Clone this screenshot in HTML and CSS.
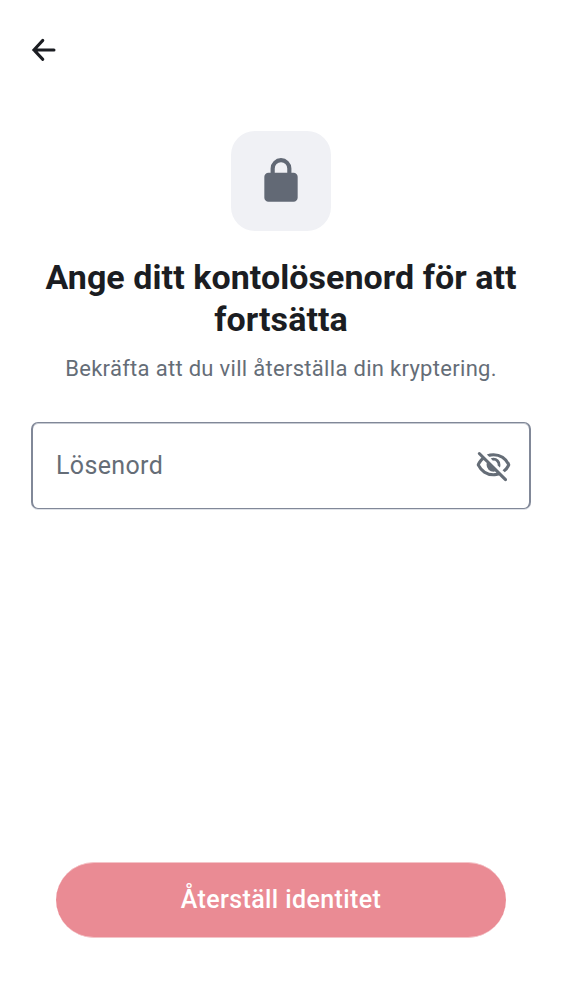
FILE: index.html
```html
<!DOCTYPE html>
<html lang="sv">
<head>
<meta charset="utf-8">
<title>Återställ identitet</title>
<link rel="stylesheet" href="styles.css">
</head>
<body>
<main class="screen">
  <header class="topbar">
    <svg class="back" viewBox="0 0 30 30"><path d="M14.8 5.4 5.9 14.9l8.9 9.5M6 14.9h20"/></svg>
  </header>
  <section class="content">
    <div class="tile">
      <svg class="lock" viewBox="0 0 24 24"><path d="M6 22q-.824 0-1.412-.587A1.93 1.93 0 0 1 4 20V10q0-.825.588-1.412A1.93 1.93 0 0 1 6 8h1V6q0-2.075 1.463-3.537Q9.926 1 12 1t3.537 1.463T17 6v2h1q.824 0 1.413.588Q20 9.175 20 10v10q0 .824-.587 1.413A1.93 1.93 0 0 1 18 22zM9 8h6V6q0-1.25-.875-2.125A2.9 2.9 0 0 0 12 3q-1.25 0-2.125.875A2.9 2.9 0 0 0 9 6z"/></svg>
    </div>
    <h1 class="title">Ange ditt kontolösenord för att fortsätta</h1>
    <p class="subtitle">Bekräfta att du vill återställa din kryptering.</p>
    <div class="field">
      <span class="label">Lösenord</span>
      <svg class="eye" viewBox="0 0 24 24"><path d="m16.1 13.3-1.45-1.45q.225-1.175-.675-2.2t-2.325-.8L10.2 7.4q.424-.2.863-.3A4.2 4.2 0 0 1 12 7q1.875 0 3.188 1.313Q16.5 9.625 16.5 11.5q0 .5-.1.938t-.3.862m3.2 3.15-1.45-1.4a11 11 0 0 0 1.688-1.588A9 9 0 0 0 20.8 11.5q-1.25-2.524-3.588-4.012Q14.875 6 12 6q-.724 0-1.425.1a10 10 0 0 0-1.375.3L7.65 4.85A11.1 11.1 0 0 1 12 4q3.575 0 6.425 1.887T22.7 10.8a.8.8 0 0 1 .125.313q.05.188.05.387a2 2 0 0 1-.125.7 10.9 10.9 0 0 1-3.45 4.25m-.2 5.45-3.5-3.45q-.874.274-1.762.413Q12.95 19 12 19q-3.575 0-6.425-1.887T1.3 12.2a.8.8 0 0 1-.125-.312 2 2 0 0 1 0-.763.8.8 0 0 1 .125-.3Q1.825 9.7 2.55 8.75A13.3 13.3 0 0 1 4.15 7L2.075 4.9a.93.93 0 0 1-.275-.688q0-.412.3-.712a.95.95 0 0 1 .7-.275q.425 0 .7.275l17 17q.275.275.288.688a.93.93 0 0 1-.288.712.95.95 0 0 1-.7.275.95.95 0 0 1-.7-.275M5.55 8.4q-.725.65-1.325 1.425T3.2 11.5q1.25 2.524 3.588 4.012T12 17q.5 0 .975-.062.475-.063.975-.138l-.9-.95q-.274.075-.525.113A3.5 3.5 0 0 1 12 16q-1.875 0-3.187-1.312Q7.5 13.375 7.5 11.5q0-.274.037-.525.038-.25.113-.525z"/></svg>
    </div>
  </section>
  <div class="button">Återställ identitet</div>
</main>
</body>
</html>
```

FILE: styles.css
```css
* { box-sizing: border-box; }
body { margin: 0; background: #fff; font-family: Roboto, sans-serif; }
.screen { display: flex; flex-direction: column; height: 1000px; padding-bottom: 62px; }
.topbar { height: 100px; padding: 35px 0 0 28px; }
svg { display: block; }
.back { width: 30px; height: 30px; fill: none; stroke: #1b1d22; stroke-width: 3; stroke-linecap: round; stroke-linejoin: miter; }
.content { flex: 1; display: flex; flex-direction: column; align-items: center; padding: 31px 31px 0; }
.tile { width: 100px; height: 100px; border-radius: 24px; background: #f0f1f5; display: flex; align-items: center; justify-content: center; }
.lock { width: 50px; height: 50px; fill: #626975; }
.title { margin: 25px 0 0; width: 500px; text-align: center; font-size: 34px; line-height: 42px; letter-spacing: .06px; font-weight: 700; color: #1b1d22; }
.subtitle { margin: 16px 0 0; font-size: 22px; line-height: 26px; letter-spacing: .3px; color: #656d77; white-space: nowrap; }
.field { margin-top: 40px; width: 500px; height: 87px; border: solid #818898; border-width: 1px 2px; border-radius: 7px; box-shadow: inset 0 1px #c6cad2, 0 1px #dfe2e8; display: flex; align-items: center; justify-content: space-between; padding: 0 17px 0 23px; }
.label { font-size: 25px; line-height: 29px; letter-spacing: .36px; color: #656d77; }
.eye { width: 37px; height: 37px; fill: #656d77; }
.button { margin: 0 56px; height: 76px; padding-bottom: 1px; border: solid #f4c4c8; border-width: 1px 0; border-radius: 38px; background: #ea8b94; color: #fff; font-size: 25px; font-weight: 500; letter-spacing: .4px; display: flex; align-items: center; justify-content: center; }
```
